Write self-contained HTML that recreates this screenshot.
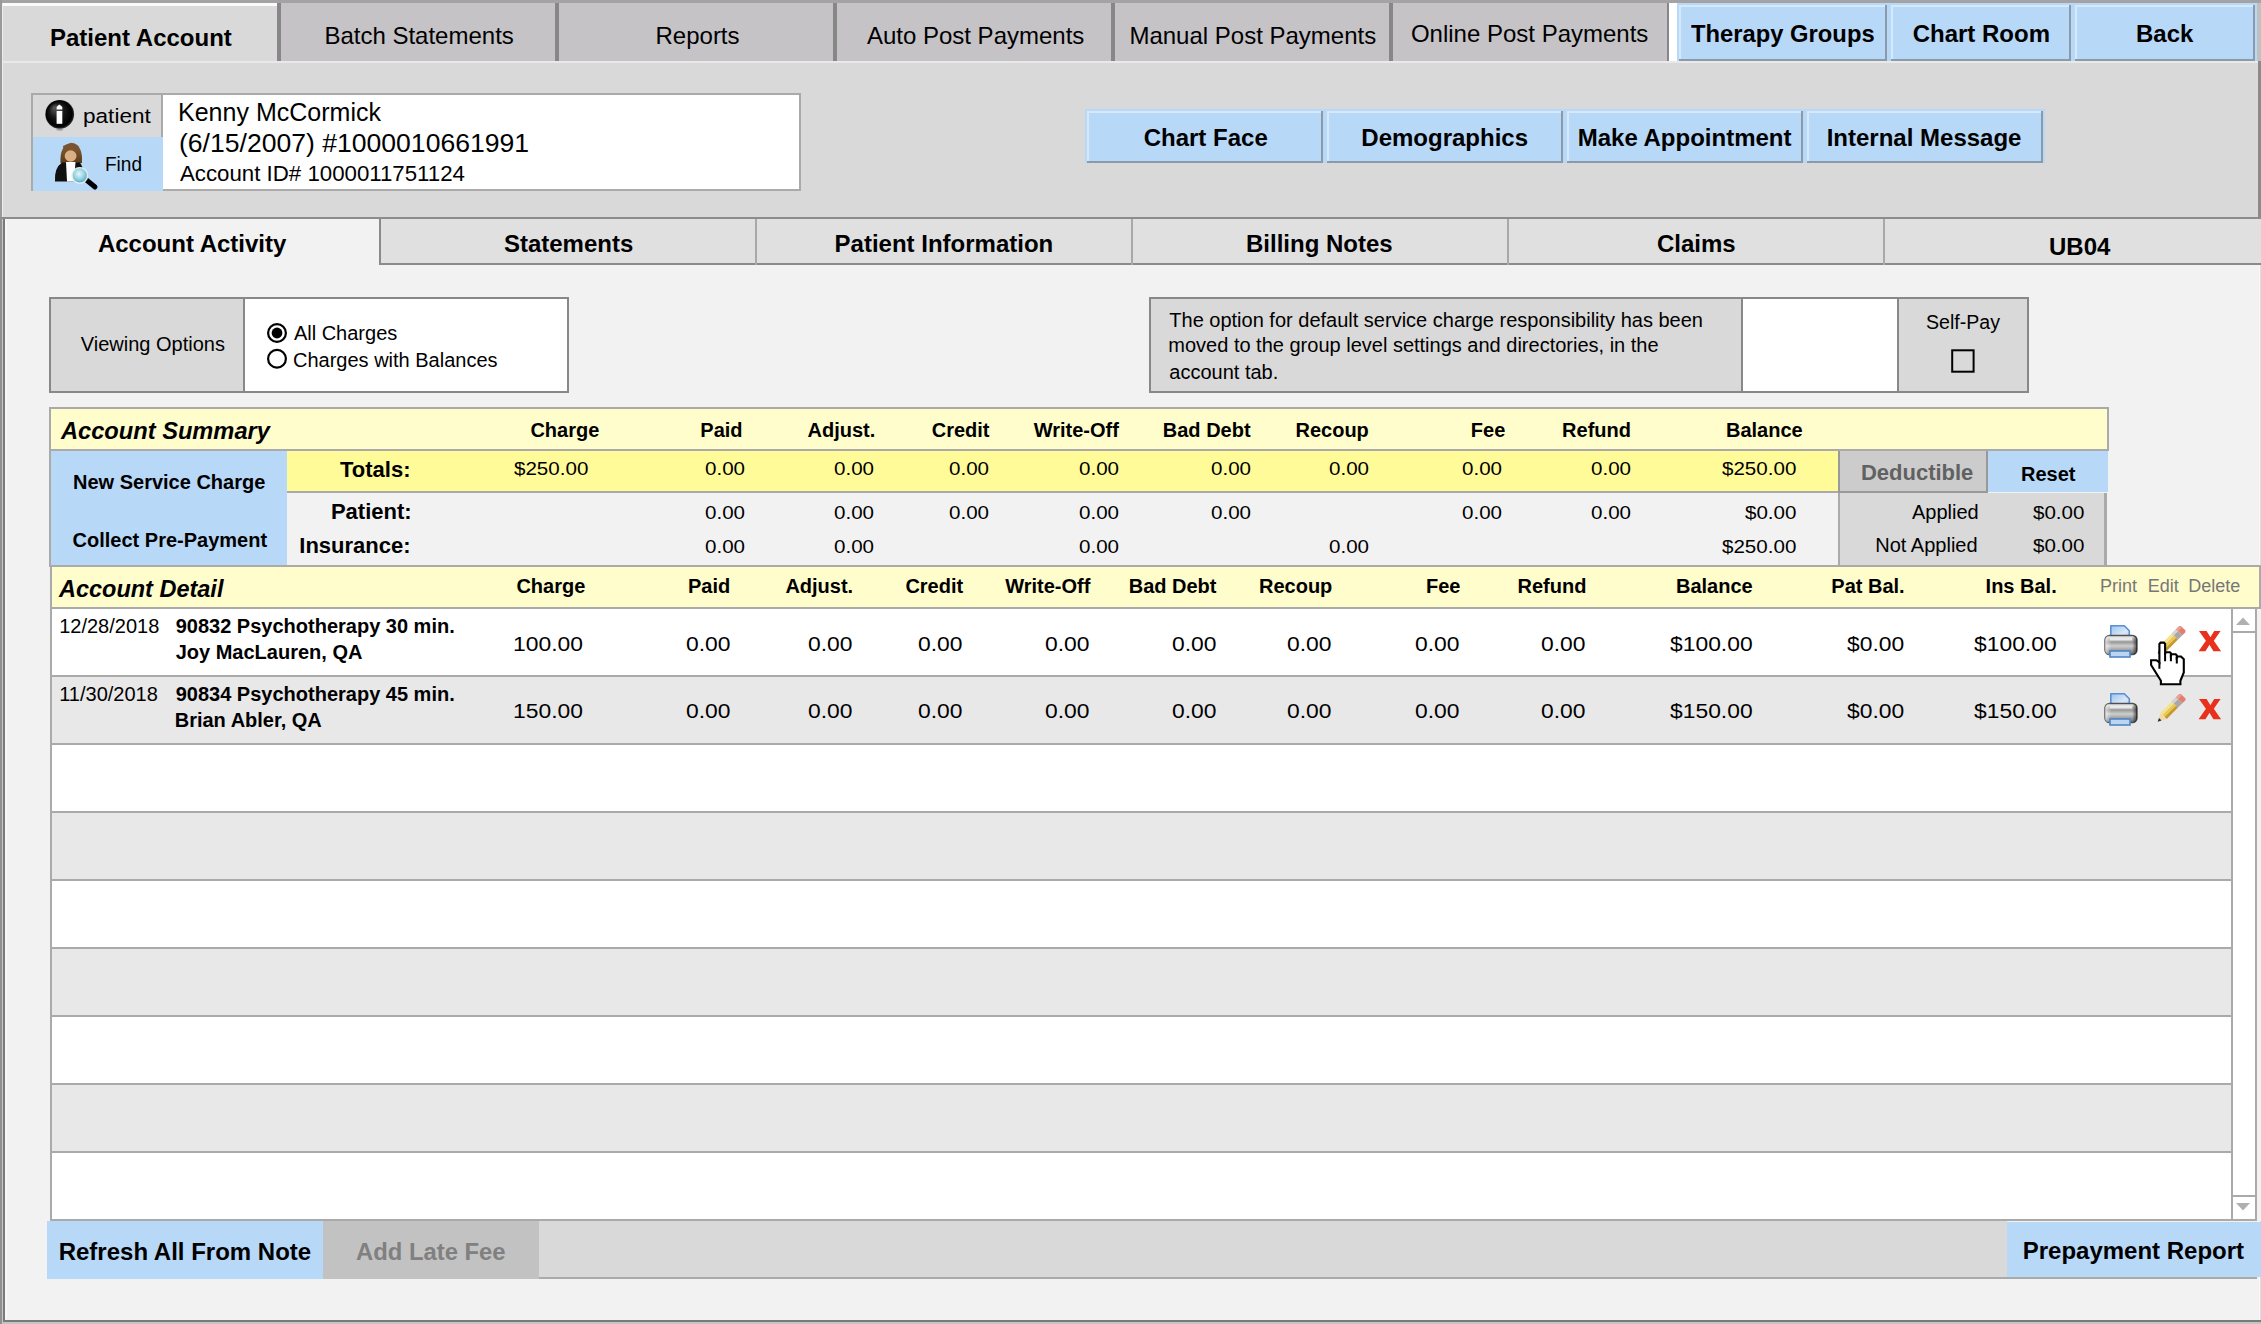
<!DOCTYPE html>
<html><head><meta charset="utf-8"><style>
html,body{margin:0;padding:0;}
body{width:2261px;height:1324px;overflow:hidden;position:relative;font-family:"Liberation Sans",sans-serif;color:#000;background:#f2f2f2;}
body>div,body>span,body>svg{position:absolute;}
span{white-space:pre;}
</style></head><body>
<div style="left:0px;top:0px;width:2261px;height:1324px;background:#f2f2f2;"></div>
<div style="left:0px;top:0px;width:2261px;height:217px;background:#d9d9d9;"></div>
<div style="left:0px;top:0px;width:2261px;height:3px;background:#a3a3a3;"></div>
<div style="left:0px;top:0px;width:2px;height:217px;background:#999;"></div>
<div style="left:2px;top:3px;width:1px;height:214px;background:#ececec;"></div>
<div style="left:2258px;top:61px;width:3px;height:156px;background:#8a8a8a;"></div>
<div style="left:3px;top:3px;width:274px;height:58px;background:#d9d9d9;"></div>
<div style="left:3px;top:3px;width:274px;height:3px;background:#fbfbfb;"></div>
<div style="left:281px;top:3px;width:1386px;height:58px;background:#c5c3c6;"></div>
<div style="left:277px;top:3px;width:4px;height:58px;background:#878787;"></div>
<div style="left:555px;top:3px;width:4px;height:58px;background:#878787;"></div>
<div style="left:833px;top:3px;width:4px;height:58px;background:#878787;"></div>
<div style="left:1111px;top:3px;width:4px;height:58px;background:#878787;"></div>
<div style="left:1389px;top:3px;width:4px;height:58px;background:#878787;"></div>
<div style="left:1667px;top:3px;width:2px;height:58px;background:#878787;"></div>
<div style="left:1669px;top:3px;width:8px;height:58px;background:#ffffff;"></div>
<div style="left:2257px;top:3px;width:4px;height:58px;background:#c0c0c0;"></div>
<div style="left:1677px;top:3px;width:580px;height:58px;background:#b8d8f8;"></div>
<div style="left:1679px;top:5px;width:208px;height:2px;background:#d6e8fc;"></div>
<div style="left:1679px;top:5px;width:2px;height:56px;background:#d6e8fc;"></div>
<div style="left:1679px;top:59px;width:208px;height:2px;background:#8a9aab;"></div>
<div style="left:1885px;top:5px;width:2px;height:56px;background:#8a9aab;"></div>
<div style="left:1891px;top:5px;width:180px;height:2px;background:#d6e8fc;"></div>
<div style="left:1891px;top:5px;width:2px;height:56px;background:#d6e8fc;"></div>
<div style="left:1891px;top:59px;width:180px;height:2px;background:#8a9aab;"></div>
<div style="left:2069px;top:5px;width:2px;height:56px;background:#8a9aab;"></div>
<div style="left:2075px;top:5px;width:180px;height:2px;background:#d6e8fc;"></div>
<div style="left:2075px;top:5px;width:2px;height:56px;background:#d6e8fc;"></div>
<div style="left:2075px;top:59px;width:180px;height:2px;background:#8a9aab;"></div>
<div style="left:2253px;top:5px;width:2px;height:56px;background:#8a9aab;"></div>
<div style="left:3px;top:61px;width:2255px;height:2px;background:#e9e9e9;"></div>
<div style="left:31px;top:93px;width:770px;height:98px;background:#aaaaaa;"></div>
<div style="left:33px;top:95px;width:766px;height:94px;background:#ffffff;"></div>
<div style="left:33px;top:95px;width:128px;height:42px;background:#d9d9d9;"></div>
<div style="left:161px;top:95px;width:2px;height:42px;background:#aaaaaa;"></div>
<div style="left:33px;top:137px;width:130px;height:54px;background:#b8d8f8;"></div>
<div style="left:1085px;top:109px;width:960px;height:54px;background:#b8d8f8;"></div>
<div style="left:1087px;top:111px;width:236px;height:2px;background:#d6e8fc;"></div>
<div style="left:1087px;top:111px;width:2px;height:52px;background:#d6e8fc;"></div>
<div style="left:1087px;top:161px;width:236px;height:2px;background:#8a9aab;"></div>
<div style="left:1321px;top:111px;width:2px;height:52px;background:#8a9aab;"></div>
<div style="left:1327px;top:111px;width:236px;height:2px;background:#d6e8fc;"></div>
<div style="left:1327px;top:111px;width:2px;height:52px;background:#d6e8fc;"></div>
<div style="left:1327px;top:161px;width:236px;height:2px;background:#8a9aab;"></div>
<div style="left:1561px;top:111px;width:2px;height:52px;background:#8a9aab;"></div>
<div style="left:1567px;top:111px;width:236px;height:2px;background:#d6e8fc;"></div>
<div style="left:1567px;top:111px;width:2px;height:52px;background:#d6e8fc;"></div>
<div style="left:1567px;top:161px;width:236px;height:2px;background:#8a9aab;"></div>
<div style="left:1801px;top:111px;width:2px;height:52px;background:#8a9aab;"></div>
<div style="left:1807px;top:111px;width:236px;height:2px;background:#d6e8fc;"></div>
<div style="left:1807px;top:111px;width:2px;height:52px;background:#d6e8fc;"></div>
<div style="left:1807px;top:161px;width:236px;height:2px;background:#8a9aab;"></div>
<div style="left:2041px;top:111px;width:2px;height:52px;background:#8a9aab;"></div>
<div style="left:0px;top:217px;width:2261px;height:2px;background:#8c8c8c;"></div>
<div style="left:0px;top:219px;width:2261px;height:1105px;background:#f2f2f2;"></div>
<div style="left:381px;top:219px;width:1880px;height:44px;background:#e0e0e0;"></div>
<div style="left:379px;top:263px;width:1882px;height:2px;background:#8a8a8a;"></div>
<div style="left:379px;top:219px;width:2px;height:46px;background:#8a8a8a;"></div>
<div style="left:755px;top:219px;width:2px;height:46px;background:#a8a8a8;"></div>
<div style="left:1131px;top:219px;width:2px;height:46px;background:#a8a8a8;"></div>
<div style="left:1507px;top:219px;width:2px;height:46px;background:#a8a8a8;"></div>
<div style="left:1883px;top:219px;width:2px;height:46px;background:#a8a8a8;"></div>
<div style="left:0px;top:217px;width:2px;height:1107px;background:#909090;"></div>
<div style="left:2px;top:219px;width:1px;height:1105px;background:#c8c8c8;"></div>
<div style="left:3px;top:219px;width:2px;height:1102px;background:#7a7a7a;"></div>
<div style="left:5px;top:219px;width:2px;height:1100px;background:#f8f8f8;"></div>
<div style="left:2259px;top:265px;width:1px;height:1056px;background:#f8f8f8;"></div>
<div style="left:2260px;top:265px;width:1px;height:1059px;background:#dddddd;"></div>
<div style="left:3px;top:1320px;width:2258px;height:2px;background:#7a7a7a;"></div>
<div style="left:3px;top:1322px;width:2258px;height:2px;background:#c4c4c4;"></div>
<div style="left:49px;top:297px;width:520px;height:96px;background:#888888;"></div>
<div style="left:51px;top:299px;width:192px;height:92px;background:#d9d9d9;"></div>
<div style="left:245px;top:299px;width:322px;height:92px;background:#ffffff;"></div>
<div style="left:1149px;top:297px;width:880px;height:96px;background:#888888;"></div>
<div style="left:1151px;top:299px;width:590px;height:92px;background:#d9d9d9;"></div>
<div style="left:1743px;top:299px;width:154px;height:92px;background:#ffffff;"></div>
<div style="left:1899px;top:299px;width:128px;height:92px;background:#d9d9d9;"></div>
<div style="left:49px;top:407px;width:2060px;height:44px;background:#aaaaaa;"></div>
<div style="left:51px;top:409px;width:2056px;height:40px;background:#fffdcc;"></div>
<div style="left:51px;top:451px;width:236px;height:116px;background:#b8d8f8;"></div>
<div style="left:287px;top:451px;width:1551px;height:40px;background:#fffb99;"></div>
<div style="left:287px;top:491px;width:1551px;height:2px;background:#aaaaaa;"></div>
<div style="left:287px;top:493px;width:1551px;height:72px;background:#f2f2f2;"></div>
<div style="left:287px;top:565px;width:1551px;height:2px;background:#aaaaaa;"></div>
<div style="left:49px;top:451px;width:2px;height:116px;background:#aaaaaa;"></div>
<div style="left:1838px;top:451px;width:150px;height:42px;background:#999999;"></div>
<div style="left:1840px;top:451px;width:146px;height:40px;background:#cccccc;"></div>
<div style="left:1988px;top:451px;width:120px;height:41px;background:#b8d8f8;"></div>
<div style="left:1838px;top:493px;width:269px;height:74px;background:#aaaaaa;"></div>
<div style="left:1840px;top:493px;width:264px;height:72px;background:#d9d9d9;"></div>
<div style="left:50px;top:565px;width:2211px;height:44px;background:#aaaaaa;"></div>
<div style="left:52px;top:567px;width:2207px;height:40px;background:#fffdcc;"></div>
<div style="left:50px;top:609px;width:2183px;height:612px;background:#aaaaaa;"></div>
<div style="left:52px;top:609px;width:2179px;height:66px;background:#ffffff;"></div>
<div style="left:52px;top:677px;width:2179px;height:66px;background:#e8e8e8;"></div>
<div style="left:52px;top:745px;width:2179px;height:66px;background:#ffffff;"></div>
<div style="left:52px;top:813px;width:2179px;height:66px;background:#e8e8e8;"></div>
<div style="left:52px;top:881px;width:2179px;height:66px;background:#ffffff;"></div>
<div style="left:52px;top:949px;width:2179px;height:66px;background:#e8e8e8;"></div>
<div style="left:52px;top:1017px;width:2179px;height:66px;background:#ffffff;"></div>
<div style="left:52px;top:1085px;width:2179px;height:66px;background:#e8e8e8;"></div>
<div style="left:52px;top:1153px;width:2179px;height:66px;background:#ffffff;"></div>
<div style="left:2233px;top:609px;width:24px;height:612px;background:#aaaaaa;"></div>
<div style="left:2233px;top:609px;width:22px;height:610px;background:#ffffff;"></div>
<div style="left:2233px;top:631px;width:22px;height:2px;background:#aaaaaa;"></div>
<div style="left:2233px;top:1195px;width:22px;height:2px;background:#aaaaaa;"></div>
<div style="left:2257px;top:609px;width:4px;height:612px;background:#f2f2f2;"></div>
<svg style="position:absolute;left:2236px;top:617px" width="14" height="8"><polygon points="0,8 7,0.5 14,8" fill="#b0b0b0"/></svg>
<svg style="position:absolute;left:2236px;top:1203px" width="14" height="8"><polygon points="0,0 7,7.5 14,0" fill="#b0b0b0"/></svg>
<div style="left:539px;top:1221px;width:1468px;height:56px;background:#d9d9d9;"></div>
<div style="left:539px;top:1277px;width:1718px;height:2px;background:#aaaaaa;"></div>
<div style="left:47px;top:1221px;width:276px;height:58px;background:#b8d8f8;"></div>
<div style="left:323px;top:1221px;width:216px;height:58px;background:#c2c2c2;"></div>
<div style="left:2007px;top:1222px;width:254px;height:55px;background:#b8d8f8;"></div>
<span style="left:50.0px;top:26px;font-size:24px;line-height:24px;font-weight:bold;">Patient Account</span>
<span style="left:324.4px;top:24px;font-size:24px;line-height:24px;">Batch Statements</span>
<span style="left:655.5px;top:24px;font-size:24px;line-height:24px;">Reports</span>
<span style="left:866.9px;top:24px;font-size:24px;line-height:24px;">Auto Post Payments</span>
<span style="left:1129.4px;top:24px;font-size:24px;line-height:24px;">Manual Post Payments</span>
<span style="left:1410.9px;top:22px;font-size:24px;line-height:24px;">Online Post Payments</span>
<span style="left:1691.0px;top:22px;font-size:24px;line-height:24px;font-weight:bold;transform:scaleX(0.9907);transform-origin:0 0;">Therapy Groups</span>
<span style="left:1912.7px;top:22px;font-size:24px;line-height:24px;font-weight:bold;">Chart Room</span>
<span style="left:2136.0px;top:22px;font-size:24px;line-height:24px;font-weight:bold;">Back</span>
<span style="left:82.9px;top:106px;font-size:20.5px;line-height:20.5px;transform:scaleX(1.1010);transform-origin:0 0;">patient</span>
<span style="left:105.0px;top:154px;font-size:20px;line-height:20px;transform:scaleX(0.9515);transform-origin:0 0;">Find</span>
<span style="left:178.4px;top:99px;font-size:26px;line-height:26px;transform:scaleX(0.9622);transform-origin:0 0;">Kenny McCormick</span>
<span style="left:178.9px;top:131px;font-size:25px;line-height:25px;transform:scaleX(1.0624);transform-origin:0 0;">(6/15/2007) #1000010661991</span>
<span style="left:180.0px;top:164px;font-size:21.5px;line-height:21.5px;transform:scaleX(1.0349);transform-origin:0 0;">Account ID# 1000011751124</span>
<span style="left:1143.7px;top:126px;font-size:24px;line-height:24px;font-weight:bold;">Chart Face</span>
<span style="left:1361.3px;top:126px;font-size:24px;line-height:24px;font-weight:bold;">Demographics</span>
<span style="left:1577.7px;top:126px;font-size:24px;line-height:24px;font-weight:bold;">Make Appointment</span>
<span style="left:1826.7px;top:126px;font-size:24px;line-height:24px;font-weight:bold;">Internal Message</span>
<span style="left:97.9px;top:232px;font-size:24px;line-height:24px;font-weight:bold;">Account Activity</span>
<span style="left:503.9px;top:232px;font-size:24px;line-height:24px;font-weight:bold;">Statements</span>
<span style="left:834.6px;top:232px;font-size:24px;line-height:24px;font-weight:bold;">Patient Information</span>
<span style="left:1246.0px;top:232px;font-size:24px;line-height:24px;font-weight:bold;">Billing Notes</span>
<span style="left:1656.9px;top:232px;font-size:24px;line-height:24px;font-weight:bold;">Claims</span>
<span style="left:2049.0px;top:235px;font-size:24px;line-height:24px;font-weight:bold;">UB04</span>
<span style="left:80.8px;top:334px;font-size:20px;line-height:20px;">Viewing Options</span>
<span style="left:293.9px;top:323px;font-size:20px;line-height:20px;">All Charges</span>
<span style="left:293.0px;top:350px;font-size:20px;line-height:20px;">Charges with Balances</span>
<span style="left:1169.3px;top:310px;font-size:20px;line-height:20px;">The option for default service charge responsibility has been</span>
<span style="left:1168.3px;top:335px;font-size:20px;line-height:20px;">moved to the group level settings and directories, in the</span>
<span style="left:1169.3px;top:362px;font-size:20px;line-height:20px;">account tab.</span>
<span style="left:1926.0px;top:312px;font-size:20px;line-height:20px;transform:scaleX(0.9790);transform-origin:0 0;">Self-Pay</span>
<span style="left:60.7px;top:419px;font-size:24px;line-height:24px;font-weight:bold;font-style:italic;transform:scaleX(0.9851);transform-origin:0 0;">Account Summary</span>
<span style="left:530.4px;top:420px;font-size:20px;line-height:20px;font-weight:bold;">Charge</span>
<span style="left:700.3px;top:420px;font-size:20px;line-height:20px;font-weight:bold;">Paid</span>
<span style="left:807.5px;top:420px;font-size:20px;line-height:20px;font-weight:bold;">Adjust.</span>
<span style="left:931.7px;top:420px;font-size:20px;line-height:20px;font-weight:bold;">Credit</span>
<span style="left:1033.7px;top:420px;font-size:20px;line-height:20px;font-weight:bold;">Write-Off</span>
<span style="left:1162.8px;top:420px;font-size:20px;line-height:20px;font-weight:bold;">Bad Debt</span>
<span style="left:1295.5px;top:420px;font-size:20px;line-height:20px;font-weight:bold;">Recoup</span>
<span style="left:1470.8px;top:420px;font-size:20px;line-height:20px;font-weight:bold;">Fee</span>
<span style="left:1562.1px;top:420px;font-size:20px;line-height:20px;font-weight:bold;">Refund</span>
<span style="left:1726.0px;top:420px;font-size:20px;line-height:20px;font-weight:bold;">Balance</span>
<span style="left:73.0px;top:472px;font-size:20px;line-height:20px;font-weight:bold;">New Service Charge</span>
<span style="left:72.6px;top:530px;font-size:20px;line-height:20px;font-weight:bold;">Collect Pre-Payment</span>
<span style="left:340.0px;top:459px;font-size:22px;line-height:22px;font-weight:bold;">Totals:</span>
<span style="left:330.9px;top:501px;font-size:22px;line-height:22px;font-weight:bold;">Patient:</span>
<span style="left:299.3px;top:535px;font-size:22px;line-height:22px;font-weight:bold;">Insurance:</span>
<span style="left:513.8px;top:459px;font-size:19px;line-height:19px;transform:scaleX(1.0820);transform-origin:0 0;">$250.00</span>
<span style="left:704.8px;top:459px;font-size:19px;line-height:19px;transform:scaleX(1.0820);transform-origin:0 0;">0.00</span>
<span style="left:834.4px;top:459px;font-size:19px;line-height:19px;transform:scaleX(1.0820);transform-origin:0 0;">0.00</span>
<span style="left:948.6px;top:459px;font-size:19px;line-height:19px;transform:scaleX(1.0820);transform-origin:0 0;">0.00</span>
<span style="left:1078.6px;top:459px;font-size:19px;line-height:19px;transform:scaleX(1.0820);transform-origin:0 0;">0.00</span>
<span style="left:1210.6px;top:459px;font-size:19px;line-height:19px;transform:scaleX(1.0820);transform-origin:0 0;">0.00</span>
<span style="left:1328.6px;top:459px;font-size:19px;line-height:19px;transform:scaleX(1.0820);transform-origin:0 0;">0.00</span>
<span style="left:1462.4px;top:459px;font-size:19px;line-height:19px;transform:scaleX(1.0820);transform-origin:0 0;">0.00</span>
<span style="left:1590.9px;top:459px;font-size:19px;line-height:19px;transform:scaleX(1.0820);transform-origin:0 0;">0.00</span>
<span style="left:1722.3px;top:459px;font-size:19px;line-height:19px;transform:scaleX(1.0820);transform-origin:0 0;">$250.00</span>
<span style="left:704.8px;top:503px;font-size:19px;line-height:19px;transform:scaleX(1.0820);transform-origin:0 0;">0.00</span>
<span style="left:834.4px;top:503px;font-size:19px;line-height:19px;transform:scaleX(1.0820);transform-origin:0 0;">0.00</span>
<span style="left:948.6px;top:503px;font-size:19px;line-height:19px;transform:scaleX(1.0820);transform-origin:0 0;">0.00</span>
<span style="left:1078.6px;top:503px;font-size:19px;line-height:19px;transform:scaleX(1.0820);transform-origin:0 0;">0.00</span>
<span style="left:1210.6px;top:503px;font-size:19px;line-height:19px;transform:scaleX(1.0820);transform-origin:0 0;">0.00</span>
<span style="left:1462.4px;top:503px;font-size:19px;line-height:19px;transform:scaleX(1.0820);transform-origin:0 0;">0.00</span>
<span style="left:1590.9px;top:503px;font-size:19px;line-height:19px;transform:scaleX(1.0820);transform-origin:0 0;">0.00</span>
<span style="left:1745.2px;top:503px;font-size:19px;line-height:19px;transform:scaleX(1.0820);transform-origin:0 0;">$0.00</span>
<span style="left:704.8px;top:537px;font-size:19px;line-height:19px;transform:scaleX(1.0820);transform-origin:0 0;">0.00</span>
<span style="left:834.4px;top:537px;font-size:19px;line-height:19px;transform:scaleX(1.0820);transform-origin:0 0;">0.00</span>
<span style="left:1078.6px;top:537px;font-size:19px;line-height:19px;transform:scaleX(1.0820);transform-origin:0 0;">0.00</span>
<span style="left:1328.6px;top:537px;font-size:19px;line-height:19px;transform:scaleX(1.0820);transform-origin:0 0;">0.00</span>
<span style="left:1722.3px;top:537px;font-size:19px;line-height:19px;transform:scaleX(1.0820);transform-origin:0 0;">$250.00</span>
<span style="left:1860.9px;top:462px;font-size:22px;line-height:22px;font-weight:bold;color:#616161;">Deductible</span>
<span style="left:2021.0px;top:464px;font-size:20px;line-height:20px;font-weight:bold;">Reset</span>
<span style="left:1912.0px;top:502px;font-size:20px;line-height:20px;">Applied</span>
<span style="left:1875.3px;top:535px;font-size:20px;line-height:20px;">Not Applied</span>
<span style="left:2032.9px;top:503px;font-size:19px;line-height:19px;transform:scaleX(1.0820);transform-origin:0 0;">$0.00</span>
<span style="left:2032.9px;top:536px;font-size:19px;line-height:19px;transform:scaleX(1.0820);transform-origin:0 0;">$0.00</span>
<span style="left:59.4px;top:577px;font-size:24px;line-height:24px;font-weight:bold;font-style:italic;transform:scaleX(0.9785);transform-origin:0 0;">Account Detail</span>
<span style="left:516.4px;top:576px;font-size:20px;line-height:20px;font-weight:bold;">Charge</span>
<span style="left:688.0px;top:576px;font-size:20px;line-height:20px;font-weight:bold;">Paid</span>
<span style="left:785.4px;top:576px;font-size:20px;line-height:20px;font-weight:bold;">Adjust.</span>
<span style="left:905.4px;top:576px;font-size:20px;line-height:20px;font-weight:bold;">Credit</span>
<span style="left:1005.2px;top:576px;font-size:20px;line-height:20px;font-weight:bold;">Write-Off</span>
<span style="left:1128.7px;top:576px;font-size:20px;line-height:20px;font-weight:bold;">Bad Debt</span>
<span style="left:1259.0px;top:576px;font-size:20px;line-height:20px;font-weight:bold;">Recoup</span>
<span style="left:1426.0px;top:576px;font-size:20px;line-height:20px;font-weight:bold;">Fee</span>
<span style="left:1517.5px;top:576px;font-size:20px;line-height:20px;font-weight:bold;">Refund</span>
<span style="left:1676.0px;top:576px;font-size:20px;line-height:20px;font-weight:bold;">Balance</span>
<span style="left:1831.3px;top:576px;font-size:20px;line-height:20px;font-weight:bold;">Pat Bal.</span>
<span style="left:1985.6px;top:576px;font-size:20px;line-height:20px;font-weight:bold;">Ins Bal.</span>
<span style="left:2099.9px;top:577px;font-size:18px;line-height:18px;color:#777;">Print</span>
<span style="left:2147.7px;top:577px;font-size:18px;line-height:18px;color:#777;">Edit</span>
<span style="left:2188.3px;top:577px;font-size:18px;line-height:18px;color:#777;">Delete</span>
<span style="left:59.2px;top:616px;font-size:20px;line-height:20px;">12/28/2018</span>
<span style="left:175.7px;top:616px;font-size:20px;line-height:20px;font-weight:bold;">90832 Psychotherapy 30 min.</span>
<span style="left:175.7px;top:642px;font-size:20px;line-height:20px;font-weight:bold;">Joy MacLauren, QA</span>
<span style="left:512.5px;top:634px;font-size:20px;line-height:20px;transform:scaleX(1.1430);transform-origin:0 0;">100.00</span>
<span style="left:685.6px;top:634px;font-size:20px;line-height:20px;transform:scaleX(1.1430);transform-origin:0 0;">0.00</span>
<span style="left:807.6px;top:634px;font-size:20px;line-height:20px;transform:scaleX(1.1430);transform-origin:0 0;">0.00</span>
<span style="left:917.6px;top:634px;font-size:20px;line-height:20px;transform:scaleX(1.1430);transform-origin:0 0;">0.00</span>
<span style="left:1045.0px;top:634px;font-size:20px;line-height:20px;transform:scaleX(1.1430);transform-origin:0 0;">0.00</span>
<span style="left:1171.6px;top:634px;font-size:20px;line-height:20px;transform:scaleX(1.1430);transform-origin:0 0;">0.00</span>
<span style="left:1287.3px;top:634px;font-size:20px;line-height:20px;transform:scaleX(1.1430);transform-origin:0 0;">0.00</span>
<span style="left:1415.2px;top:634px;font-size:20px;line-height:20px;transform:scaleX(1.1430);transform-origin:0 0;">0.00</span>
<span style="left:1541.3px;top:634px;font-size:20px;line-height:20px;transform:scaleX(1.1430);transform-origin:0 0;">0.00</span>
<span style="left:1669.5px;top:634px;font-size:20px;line-height:20px;transform:scaleX(1.1430);transform-origin:0 0;">$100.00</span>
<span style="left:1846.6px;top:634px;font-size:20px;line-height:20px;transform:scaleX(1.1430);transform-origin:0 0;">$0.00</span>
<span style="left:1973.6px;top:634px;font-size:20px;line-height:20px;transform:scaleX(1.1430);transform-origin:0 0;">$100.00</span>
<span style="left:59.2px;top:684px;font-size:20px;line-height:20px;">11/30/2018</span>
<span style="left:175.7px;top:684px;font-size:20px;line-height:20px;font-weight:bold;">90834 Psychotherapy 45 min.</span>
<span style="left:174.7px;top:710px;font-size:20px;line-height:20px;font-weight:bold;">Brian Abler, QA</span>
<span style="left:512.5px;top:701px;font-size:20px;line-height:20px;transform:scaleX(1.1430);transform-origin:0 0;">150.00</span>
<span style="left:685.6px;top:701px;font-size:20px;line-height:20px;transform:scaleX(1.1430);transform-origin:0 0;">0.00</span>
<span style="left:807.6px;top:701px;font-size:20px;line-height:20px;transform:scaleX(1.1430);transform-origin:0 0;">0.00</span>
<span style="left:917.6px;top:701px;font-size:20px;line-height:20px;transform:scaleX(1.1430);transform-origin:0 0;">0.00</span>
<span style="left:1045.0px;top:701px;font-size:20px;line-height:20px;transform:scaleX(1.1430);transform-origin:0 0;">0.00</span>
<span style="left:1171.6px;top:701px;font-size:20px;line-height:20px;transform:scaleX(1.1430);transform-origin:0 0;">0.00</span>
<span style="left:1287.3px;top:701px;font-size:20px;line-height:20px;transform:scaleX(1.1430);transform-origin:0 0;">0.00</span>
<span style="left:1415.2px;top:701px;font-size:20px;line-height:20px;transform:scaleX(1.1430);transform-origin:0 0;">0.00</span>
<span style="left:1541.3px;top:701px;font-size:20px;line-height:20px;transform:scaleX(1.1430);transform-origin:0 0;">0.00</span>
<span style="left:1669.5px;top:701px;font-size:20px;line-height:20px;transform:scaleX(1.1430);transform-origin:0 0;">$150.00</span>
<span style="left:1846.6px;top:701px;font-size:20px;line-height:20px;transform:scaleX(1.1430);transform-origin:0 0;">$0.00</span>
<span style="left:1973.6px;top:701px;font-size:20px;line-height:20px;transform:scaleX(1.1430);transform-origin:0 0;">$150.00</span>
<span style="left:58.7px;top:1240px;font-size:24px;line-height:24px;font-weight:bold;">Refresh All From Note</span>
<span style="left:356.3px;top:1240px;font-size:24px;line-height:24px;font-weight:bold;color:#808080;transform:scaleX(0.9924);transform-origin:0 0;">Add Late Fee</span>
<span style="left:2022.7px;top:1239px;font-size:24px;line-height:24px;font-weight:bold;">Prepayment Report</span>
<svg style="position:absolute;left:0;top:0" width="2261" height="1324" viewBox="0 0 2261 1324">
<defs>
 <radialGradient id="gInfo" cx="0.5" cy="0.5" r="0.5" fx="0.3" fy="0.25">
  <stop offset="0" stop-color="#5a5a5a"/><stop offset="0.55" stop-color="#151515"/><stop offset="0.9" stop-color="#000"/><stop offset="1" stop-color="#333"/>
 </radialGradient>
 <linearGradient id="gBody" x1="0" y1="0" x2="0" y2="1">
  <stop offset="0" stop-color="#f4f4f4"/><stop offset="0.35" stop-color="#9a9a9a"/><stop offset="0.55" stop-color="#cfcfcf"/><stop offset="1" stop-color="#6a6a6a"/>
 </linearGradient>
 <linearGradient id="gBodyH" x1="0" y1="0" x2="1" y2="0">
  <stop offset="0" stop-color="#fff" stop-opacity="0.6"/><stop offset="0.2" stop-color="#fff" stop-opacity="0"/><stop offset="0.85" stop-color="#000" stop-opacity="0"/><stop offset="1" stop-color="#000" stop-opacity="0.6"/>
 </linearGradient>
 <linearGradient id="gPaper" x1="0" y1="0" x2="1" y2="1">
  <stop offset="0" stop-color="#9cc4ee"/><stop offset="0.6" stop-color="#d8e8f8"/><stop offset="1" stop-color="#b8d4f0"/>
 </linearGradient>
 <radialGradient id="gGlass" cx="0.45" cy="0.4" r="0.6">
  <stop offset="0" stop-color="#e8f6fa"/><stop offset="0.6" stop-color="#8fd0e0"/><stop offset="1" stop-color="#4aa8c0"/>
 </radialGradient>
 <linearGradient id="gHair" x1="0" y1="0" x2="0" y2="1">
  <stop offset="0" stop-color="#8a6038"/><stop offset="1" stop-color="#5a3c1c"/>
 </linearGradient>
 <g id="printer">
  <path d="M6.8,1.8 h13.5 l5,5 v9 h-18.5 z" fill="url(#gPaper)" stroke="#5a8fd0" stroke-width="1.6" stroke-linejoin="round"/>
  <rect x="1" y="11.5" width="32" height="19" rx="4.5" fill="url(#gBody)" stroke="#505050" stroke-width="1.4"/>
  <rect x="1" y="11.5" width="32" height="19" rx="4.5" fill="url(#gBodyH)"/>
  <rect x="6" y="13.5" width="22" height="3" fill="#f2f2f2" opacity="0.8"/>
  <rect x="6" y="27" width="20" height="6" fill="#bcd6f0" stroke="#4f86c8" stroke-width="1.6"/>
 </g>
 <g id="pencil">
  <path d="M2.00,28.50 L10.76,25.94 L4.53,19.73 Z" fill="#f0d8a8"/>
  <path d="M1.65,28.85 L5.51,27.47 L3.01,24.99 Z" fill="#2a2a2a"/>
  <path d="M10.76,25.94 L22.05,14.60 L19.98,12.53 L8.68,23.87 Z" fill="#c9982e"/>
  <path d="M8.68,23.87 L19.98,12.53 L17.90,10.46 L6.61,21.80 Z" fill="#e8c850"/>
  <path d="M6.61,21.80 L17.90,10.46 L15.82,8.39 L4.53,19.73 Z" fill="#f4e28a"/>
  <path d="M22.05,14.60 L26.29,10.35 L20.05,4.14 L15.82,8.39 Z" fill="#a8a8a8"/>
  <path d="M17.90,10.46 L22.13,6.21 L20.05,4.14 L15.82,8.39 Z" fill="#d4d4d4"/>
  <path d="M26.29,10.35 L29.47,7.16 L29.25,5.25 L25.15,1.15 L23.24,0.95 L20.05,4.14 Z" fill="#e08070"/>
  <path d="M22.13,6.21 L25.74,2.59 L23.24,0.95 L20.05,4.14 Z" fill="#eca090"/>
 </g>
</defs>

<!-- info icon -->
<ellipse cx="59.7" cy="129.8" rx="3.5" ry="0.8" fill="#777" opacity="0.7"/>
<circle cx="59.7" cy="114.3" r="14.4" fill="url(#gInfo)"/>
<path d="M56.6,109.6 L56.6,107 Q59.4,104.6 59.4,104.6 Q62.3,107 62.3,107 L62.3,109.6 Z" fill="#fff"/>
<rect x="56.6" y="110.9" width="5.7" height="12.9" fill="#fff"/>

<!-- find person icon -->
<path d="M60.5,163 Q59.5,145 71.5,142.8 Q83,144 82,163 Z" fill="url(#gHair)"/>
<ellipse cx="70.6" cy="156" rx="5.9" ry="5.8" fill="#dcae84"/>
<path d="M64,153 Q63.5,148 71,147.5 Q78,148 77.5,153 L78.5,146 Q71,141 63,146 Z" fill="#7a5430"/>
<path d="M55,181.5 Q54,168 62,162.5 L80,162.5 Q84,168 84,181.5 Z" fill="#101010"/>
<path d="M66,162 L75.5,162 L74,181.5 L67,181.5 Z" fill="#ffffff"/>
<path d="M84,178 L95,187" stroke="#000" stroke-width="5" stroke-linecap="round"/>
<circle cx="79.8" cy="175.4" r="7.8" fill="url(#gGlass)" stroke="#e8eef0" stroke-width="1.4"/>

<!-- radios -->
<circle cx="277" cy="333" r="8.9" fill="#fff" stroke="#000" stroke-width="2.2"/>
<circle cx="277" cy="333" r="5.4" fill="#000"/>
<circle cx="277" cy="358.8" r="8.9" fill="#fff" stroke="#000" stroke-width="2.2"/>

<!-- self-pay checkbox -->
<rect x="1952.2" y="350.3" width="21.4" height="21.4" fill="none" stroke="#000" stroke-width="2"/>

<!-- row icons -->
<use href="#printer" x="2104" y="624"/>
<use href="#printer" x="2104" y="692"/>
<use href="#pencil" x="2156" y="625"/>
<use href="#pencil" x="2156" y="693"/>
<path d="M2199,631 h7.6 l3.8,6.3 l3.8,-6.3 h6.4 l-6.8,9.8 l7.3,10.4 h-7.7 l-3.9,-6.4 l-4.1,6.4 h-6.8 l7.3,-10.4 z" fill="#e8301c"/>
<path d="M2199,699 h7.6 l3.8,6.3 l3.8,-6.3 h6.4 l-6.8,9.8 l7.3,10.4 h-7.7 l-3.9,-6.4 l-4.1,6.4 h-6.8 l7.3,-10.4 z" fill="#e8301c"/>

<!-- hand cursor -->
<path d="M2159.4,644 L2160.6,642.6 L2163.9,642.6 L2165.1,644 L2165.1,653.2 L2166.2,652.2 L2169.8,652.2 L2170.9,653.3 L2170.9,655.3 L2171.9,654.3 L2175.7,654.3 L2176.8,655.5 L2176.8,657.5 L2177.8,656.5 L2181,656.5 L2183.8,659.2 L2183.8,672.5 L2180.4,680.8 L2180.4,684.2 L2160.9,684.2 L2160.9,680.8 L2151.1,665 L2151.1,660.2 L2156.4,660.2 L2159.4,662.4 Z" fill="#fff" stroke="#000" stroke-width="2.1" stroke-linejoin="miter"/>
<path d="M2165.1,653 V661.3 M2170.9,655 V661.3 M2176.8,657 V663.4 M2159.4,662 V668.8" stroke="#000" stroke-width="2"/>
</svg>

</body></html>
